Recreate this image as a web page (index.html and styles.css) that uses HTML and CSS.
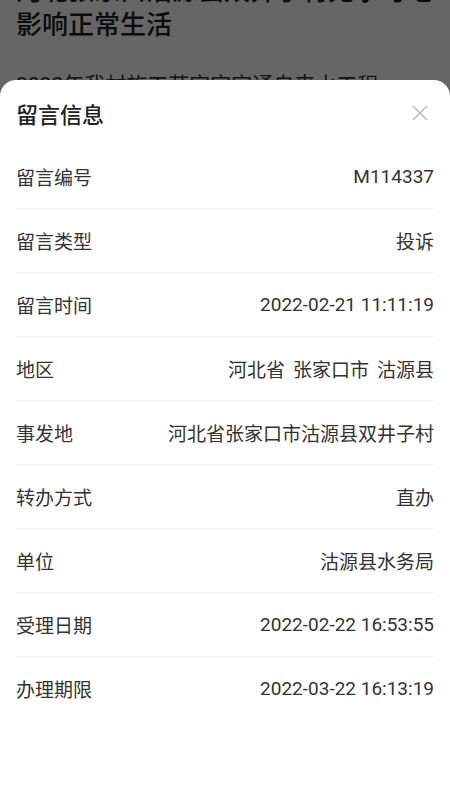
FILE: index.html
```html
<!DOCTYPE html>
<html lang="zh-CN">

<head>
    <meta charset="UTF-8">
    <meta name="viewport" content="width=device-width, initial-scale=1.0">
    <title>留言信息</title>
    <link rel="stylesheet" href="styles.css">
</head>

<body>
    <div class="page">
        <h1 class="page-title">河北张家口沽源县双井子村无水可吃影响正常生活</h1>
        <p class="page-text">2022年我村施工苏宝宝宝通自来水工程，<br />至今仍未通水，村民生活十分困难。</p>
    </div>
    <div class="mask"></div>
    <div class="sheet">
        <div class="sheet-head">
            <h2 class="sheet-title">留言信息</h2>
            <svg class="close" width="16" height="16" viewBox="0 0 16 16">
                <path d="M1 1L15 15M15 1L1 15" stroke="#b5b5b5" stroke-width="1.4" fill="none" />
            </svg>
        </div>
        <ul class="info">
            <li><span class="label">留言编号</span><span class="value">M114337</span></li>
            <li><span class="label">留言类型</span><span class="value">投诉</span></li>
            <li><span class="label">留言时间</span><span class="value">2022-02-21 11:11:19</span></li>
            <li><span class="label">地区</span><span class="value"><span>河北省</span><span class="gap">张家口市</span><span class="gap">沽源县</span></span></li>
            <li><span class="label">事发地</span><span class="value">河北省张家口市沽源县双井子村</span></li>
            <li><span class="label">转办方式</span><span class="value">直办</span></li>
            <li><span class="label">单位</span><span class="value">沽源县水务局</span></li>
            <li><span class="label">受理日期</span><span class="value">2022-02-22 16:53:55</span></li>
            <li><span class="label">办理期限</span><span class="value">2022-03-22 16:13:19</span></li>
        </ul>
    </div>
</body>

</html>
```

FILE: styles.css
```css
* {
    margin: 0;
    padding: 0;
}

body {
    width: 450px;
    height: 800px;
    overflow: hidden;
    background: #fff;
    font-family: Roboto, "Noto Sans CJK SC", sans-serif;
    color: #333;
}

.page {
    padding: 0 16px;
    margin-top: -26px;
}

.page-title {
    font-size: 26px;
    font-weight: 500;
    line-height: 34px;
    color: #222;
}

.page-text {
    margin-top: 27px;
    font-size: 21px;
    line-height: 32px;
    color: #333;
}

.mask {
    position: fixed;
    left: 0;
    top: 0;
    right: 0;
    bottom: 0;
    background: rgba(0, 0, 0, 0.6);
}

.sheet {
    position: fixed;
    left: 0;
    right: 0;
    top: 80px;
    bottom: 0;
    background: #fff;
    border-radius: 16px 16px 0 0;
}

.sheet-head {
    height: 65px;
    padding: 0 16px;
    display: flex;
    align-items: center;
    justify-content: space-between;
}

.sheet-title {
    font-size: 22px;
    font-weight: 500;
    color: #222;
}

.close {
    margin-right: 6px;
}

.info {
    list-style: none;
    padding: 0 16px;
}

.info li {
    height: 63px;
    border-bottom: 1px solid #f1f1f1;
    display: flex;
    align-items: center;
    justify-content: space-between;
    font-size: 19px;
}

.info li:last-child {
    border-bottom: none;
}

.gap {
    margin-left: 8px;
}
```
